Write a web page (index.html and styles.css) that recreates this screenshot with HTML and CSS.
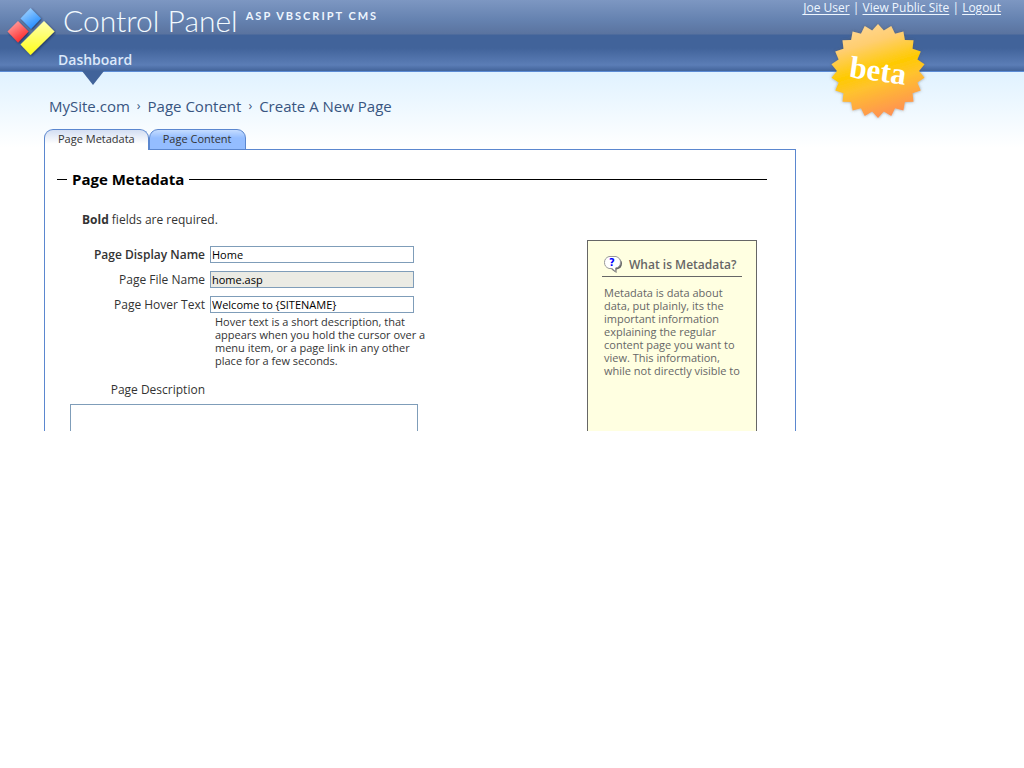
FILE: index.html
```html
<!DOCTYPE html>
<html lang="en">
<head>
<meta charset="utf-8">
<title>Control Panel</title>
<link rel="stylesheet" href="styles.css">
</head>
<body>
<header class="masthead">
  <svg class="logo" width="56" height="60" viewBox="0 0 56 60" aria-hidden="true">
    <defs>
      <linearGradient id="blue" x2="0.6" y2="1"><stop offset="0" stop-color="#b2dcff"/><stop offset="1" stop-color="#228cff"/></linearGradient>
      <linearGradient id="red" x2="0.6" y2="1"><stop offset="0" stop-color="#ffb2b2"/><stop offset="1" stop-color="#ff2929"/></linearGradient>
      <linearGradient id="yellow" x2="0" y2="1"><stop offset="0" stop-color="#ffffb0"/><stop offset="1" stop-color="#ffff18"/></linearGradient>
      <filter id="shade" x="-20%" y="-20%" width="150%" height="150%"><feDropShadow dx="1" dy="1" stdDeviation="1.2" flood-color="#14284d" flood-opacity="0.8"/></filter>
    </defs>
    <g filter="url(#shade)">
      <path d="M30.5 8 41 18.500 31 29 20.500 18.500Z" fill="url(#blue)"/>
      <path d="M18 21 28.500 31.500 18 42.500 7.500 31.500Z" fill="url(#red)"/>
      <path d="M44 21 54.500 31.500 30.500 55 20.500 44.500Z" fill="url(#yellow)"/>
    </g>
  </svg>
  <div class="brand">
    <div class="title-row">
      <h1 class="title">Control Panel</h1>
      <span class="tagline">ASP VBSCRIPT CMS</span>
    </div>
    <nav class="main-nav"><a class="nav-link" href="#">Dashboard</a></nav>
  </div>
  <div class="user-links"><a href="#">Joe User</a> | <a href="#">View Public Site</a> | <a href="#">Logout</a></div>
  <svg class="beta" width="108" height="108" viewBox="0 0 108 108" role="img" aria-label="beta">
    <defs>
      <linearGradient id="gold" x1="0.35" y1="0" x2="0.65" y2="1">
        <stop offset="0" stop-color="#ffd692"/><stop offset="0.2" stop-color="#ffce70"/><stop offset="0.47" stop-color="#ffca00"/><stop offset="0.62" stop-color="#ffc32d"/><stop offset="1" stop-color="#ff8c55"/>
      </linearGradient>
      <filter id="badge-shade"><feDropShadow dx="0" dy="0" stdDeviation="1.5" flood-color="#555" flood-opacity="0.6"/></filter>
    </defs>
    <path id="seal" fill="url(#gold)" filter="url(#badge-shade)"/>
    <text class="beta-text" x="54" y="64" text-anchor="middle" transform="rotate(8 54 54)">beta</text>
  </svg>
</header>
<main class="page">
  <nav class="crumbs"><a href="#">MySite.com</a><small>›</small><a href="#">Page Content</a><small>›</small><a href="#">Create A New Page</a></nav>
  <div class="tabs">
    <button class="tab active" type="button">Page Metadata</button>
    <button class="tab" type="button">Page Content</button>
  </div>
  <section class="panel">
    <h2 class="section-title">Page Metadata</h2>
    <div class="columns">
      <form class="fields">
        <p class="note"><b>Bold</b> fields are required.</p>
        <div class="row"><label class="required" for="display">Page Display Name</label><input id="display" type="text" value="Home"></div>
        <div class="row"><label for="file">Page File Name</label><input id="file" type="text" value="home.asp" readonly></div>
        <div class="row"><label for="hover">Page Hover Text</label><input id="hover" type="text" value="Welcome to {SITENAME}"></div>
        <p class="hint">Hover text is a short description, that<br>appears when you hold the cursor over a<br>menu item, or a page link in any other<br>place for a few seconds.</p>
        <div class="row description"><label for="desc">Page Description</label></div>
        <textarea id="desc"></textarea>
      </form>
      <aside class="help">
        <h3 class="help-title">
          <svg width="19" height="18" viewBox="0 0 19 18" aria-hidden="true">
            <path d="M14 2q4 2 4 5.500c0 3.500-2 5.500-5.500 6v3.500l-5-3.500z" fill="#666"/>
            <path d="M5 .5h7q4.500 1.500 4.500 5.500c0 3.500-1.500 5.500-5 6v3.500L8 12.500H5Q.5 11 .5 6.500T5 .5z" fill="#fff" stroke="#999"/>
            <text class="help-mark" x="8" y="10" text-anchor="middle">?</text>
          </svg>
          What is Metadata?
        </h3>
        <p class="help-text">Metadata is data about<br>data, put plainly, its the<br>important information<br>explaining the regular<br>content page you want to<br>view. This information,<br>while not directly visible to</p>
      </aside>
    </div>
  </section>
</main>
<script src="seal.js"></script>
</body>
</html>
```
FILE: seal.js
```js
// Star outline with 22 points for the badge.
const points = 22;
const outline = [];
for (let i = 0; i < points * 2; i++) {
  const radius = i % 2 ? 41 : 47;
  const angle = Math.PI * i / points - Math.PI / 2;
  outline.push((54 + radius * Math.cos(angle)).toFixed(2) + " " + (54 + radius * Math.sin(angle)).toFixed(2));
}
document.getElementById("seal").setAttribute("d", "M" + outline.join("L") + "Z");
```
FILE: styles.css
```css
* { box-sizing: border-box; }
body {
  margin: 0;
  font: 12px/16px "Trebuchet MS", "Open Sans", sans-serif;
  color: #333;
  background: #fff linear-gradient(#e0f2ff, #fff) 0 72px / 100% 76px no-repeat;
}
h1, h2, h3, p { margin: 0; font-weight: normal; }
.masthead {
  position: relative;
  display: flex;
  height: 72px;
  border-bottom: 1px solid #5b8bd5;
  background: linear-gradient(#7d97c2 0, #6582b0 20px, #5a739f 34px, #41639a 35px, #41639a 48px, #5b7db6 65px, #426399 71px);
  color: #eef6ff;
}
.logo { flex: none; }
.brand { flex: 1; padding-left: 7px; }
.title-row { display: flex; gap: 8px; }
.title { font: 300 30px/40px Lato, sans-serif; color: #f2faff; }
.tagline { font: bold 11px/32px Lato, sans-serif; letter-spacing: 2px; }
.main-nav { padding-left: 2px; }
.nav-link { position: relative; display: inline-block; margin-left: -7px; font-size: 14px; font-weight: 600; line-height: 40px; color: #dce8fa; text-decoration: none; }
.nav-link::after {
  content: "";
  position: absolute;
  top: 31px;
  left: 50%;
  margin-left: -13px;
  border: solid transparent;
  border-width: 14px 11px 0;
  border-top-color: #41639a;
}
.user-links { padding: 0 23px; white-space: pre; font-size: 12px; }
.user-links a { color: inherit; text-underline-offset: 2px; }
.beta { position: absolute; top: 17px; right: 92px; }
.beta-text { font: bold 31px "Liberation Serif", serif; fill: #fff; }
.page { padding: 23px 24px 0 44px; }
.crumbs { display: flex; gap: 7px; padding-left: 5px; font-size: 15px; line-height: 22px; color: #385581; }
.crumbs a { color: inherit; text-decoration: none; }
.tabs { position: relative; display: flex; margin: 12px 0 -1px; }
.tab {
  height: 21px;
  padding: 0 13px 2px;
  border: 1px solid #5b87cf;
  border-radius: 9px 9px 0 0;
  background: linear-gradient(#c4dcff, #94bdff 8px);
  font: 11px/16px "Trebuchet MS", "Open Sans", sans-serif;
  color: #333;
}
.tab.active { border-bottom: 0; background: linear-gradient(#d3def2, #fff 14px); }
.panel { max-width: 752px; border: 1px solid #5b87cf; border-bottom: 0; padding: 19px 28px 0 12px; }
.section-title { display: flex; align-items: center; gap: 5px; font-size: 15px; line-height: 20px; font-weight: bold; color: #000; }
.section-title::before, .section-title::after { content: ""; width: 10px; border-top: 1px solid #000; }
.section-title::after { flex: 1; }
.columns { display: flex; justify-content: space-between; padding: 23px 10px 0 13px; }
.fields { width: 352px; }
.note { padding: 0 0 18px 12px; }
.row { display: grid; grid-template-columns: 135px 204px; column-gap: 5px; margin-bottom: 8px; line-height: 17px; text-align: right; }
.required { font-weight: 600; }
.row input { width: 100%; height: 17px; padding: 0 1px; border: 1px solid #7f9db9; font: 11px "Open Sans", sans-serif; color: #000; background: #fff; }
.row input[readonly] { background: #ebebe4; }
.hint { margin-top: -6px; padding-left: 145px; font-size: 11px; line-height: 13px; white-space: nowrap; }
.description { margin: 14px 0 6px; }
textarea { display: block; width: 348px; height: 27px; border: 1px solid #7f9db9; border-bottom: 0; resize: none; }
.help { width: 170px; height: 191px; margin-top: 28px; padding: 15px 14px 0; border: 1px solid #666; border-bottom: 0; background: #ffffe1; color: #666; }
.help-title { display: flex; gap: 6px; padding: 0 0 2px 2px; border-bottom: 1px solid #666; font-size: 12px; line-height: 18px; font-weight: 600; white-space: nowrap; }
.help-mark { font: bold 10px "DejaVu Sans", sans-serif; fill: #00f; }
.help-text { padding: 9px 0 0 2px; font-size: 11px; line-height: 13px; white-space: nowrap; }
```
